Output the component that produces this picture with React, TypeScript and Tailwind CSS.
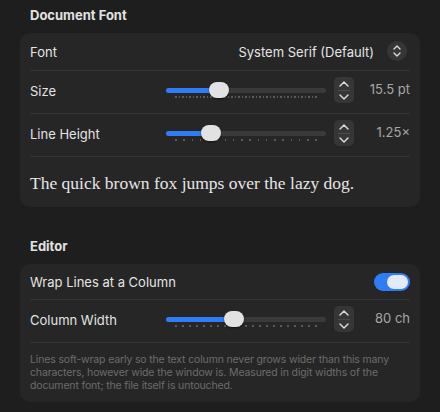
import React from "react";

const Chevrons = () => (
  <div className="flex flex-col items-center justify-center w-[20px] h-[26px] rounded-[5px] bg-[#363636]">
    <svg width="12" height="8" viewBox="0 0 12 8" fill="none">
      <path d="M2 6 L6 2 L10 6" stroke="#d8d8d8" strokeWidth="1.5" strokeLinecap="round" strokeLinejoin="round" />
    </svg>
    <div className="w-[12px] h-px bg-[#4a4a4a] my-[2px]" />
    <svg width="12" height="8" viewBox="0 0 12 8" fill="none">
      <path d="M2 2 L6 6 L10 2" stroke="#d8d8d8" strokeWidth="1.5" strokeLinecap="round" strokeLinejoin="round" />
    </svg>
  </div>
);

function Slider({ frac, dots }: { frac: number; dots: number }) {
  const knobCenter = 10 + frac * 140;
  return (
    <div className="relative w-[160px] h-[26px]">
      <div className="absolute left-0 right-0 top-[10.5px] h-[5px] rounded-full bg-[#3a3a3a]" />
      <div
        className="absolute left-0 top-[10.5px] h-[5px] rounded-full bg-[#2f7cf6]"
        style={{ width: knobCenter }}
      />
      <div className="absolute left-[9px] right-[9px] top-[19px] flex justify-between">
        {Array.from({ length: dots }).map((_, i) => (
          <div key={i} className="w-[1.5px] h-[1.5px] bg-[#5a5a5a]" />
        ))}
      </div>
      <div
        className="absolute top-[5px] w-[20px] h-[16px] rounded-full bg-[#e2e2e2] shadow-[0_1px_2px_rgba(0,0,0,0.5)]"
        style={{ left: knobCenter - 10 }}
      />
    </div>
  );
}

function SliderRow({ label, frac, dots, value }: { label: string; frac: number; dots: number; value: string }) {
  return (
    <div className="flex items-center pt-[6px] pb-[10px] border-b border-[#333333]">
      <div className="w-[136px] text-[13px] leading-[16px] pt-[1px] text-[#e4e4e4]">{label}</div>
      <Slider frac={frac} dots={dots} />
      <div className="ml-[8px]">
        <Chevrons />
      </div>
      <div className="flex-1 text-right text-[13px] text-[#a6a6a6]">{value}</div>
    </div>
  );
}

export default function App() {
  return (
    <div
      className="w-[440px] h-[412px] bg-[#1e1e1e] px-[20px] pt-[7px] overflow-hidden"
      style={{ fontFamily: "Inter, 'Noto Sans', sans-serif" }}
    >
      <div className="px-[10px] h-[16px] leading-[16px] text-[13px] font-bold text-[#e2e2e2]">Document Font</div>
      <div className="mt-[10px] rounded-[10px] bg-[#262626] px-[10px]">
        <div className="flex items-center pt-[8px] pb-[9px] border-b border-[#333333]">
          <div className="flex-1 text-[13px] leading-[16px] pt-[2px] text-[#e4e4e4]">Font</div>
          <div className="text-[13px] leading-[16px] pt-[2px] text-[#e4e4e4]">System Serif (Default)</div>
          <div className="ml-[13px] mr-[3px] w-[20px] h-[20px] rounded-full bg-[#363636] flex flex-col items-center justify-center gap-[2px]">
            <svg width="8" height="5" viewBox="0 0 8 5" fill="none">
              <path d="M1 4 L4 1 L7 4" stroke="#dcdcdc" strokeWidth="1.4" strokeLinecap="round" strokeLinejoin="round" />
            </svg>
            <svg width="8" height="5" viewBox="0 0 8 5" fill="none">
              <path d="M1 1 L4 4 L7 1" stroke="#dcdcdc" strokeWidth="1.4" strokeLinecap="round" strokeLinejoin="round" />
            </svg>
          </div>
        </div>
        <SliderRow label="Size" frac={0.307} dots={41} value="15.5 pt" />
        <SliderRow label="Line Height" frac={0.25} dots={18} value="1.25×" />
        <div
          className="pt-[16px] pb-[14px] text-[17.5px] leading-[20px] text-[#e6e6e6]"
          style={{ fontFamily: "'Liberation Serif', 'DejaVu Serif', serif" }}
        >
          The quick brown fox jumps over the lazy dog.
        </div>
      </div>

      <div className="mt-[31px] px-[10px] h-[16px] leading-[16px] text-[13px] font-bold text-[#e2e2e2]">Editor</div>
      <div className="mt-[10px] rounded-[10px] bg-[#262626] px-[10px]">
        <div className="flex items-center pt-[9px] pb-[8px] border-b border-[#333333]">
          <div className="flex-1 text-[13px] leading-[16px] text-[#e4e4e4]">Wrap Lines at a Column</div>
          <div className="w-[36px] h-[18px] rounded-full bg-[#2f7cf6] flex items-center justify-end pr-[2px]">
            <div className="w-[21px] h-[14px] rounded-full bg-[#e3ebfb]" />
          </div>
        </div>
        <SliderRow label="Column Width" frac={0.414} dots={21} value="80 ch" />
        <div className="pt-[10px] pb-[10px] text-[10.5px] leading-[13px] tracking-[-0.15px] text-[#6c6c6c]">
          Lines soft-wrap early so the text column never grows wider than this many characters, however wide the
          window is. Measured in digit widths of the document font; the file itself is untouched.
        </div>
      </div>
    </div>
  );
}
